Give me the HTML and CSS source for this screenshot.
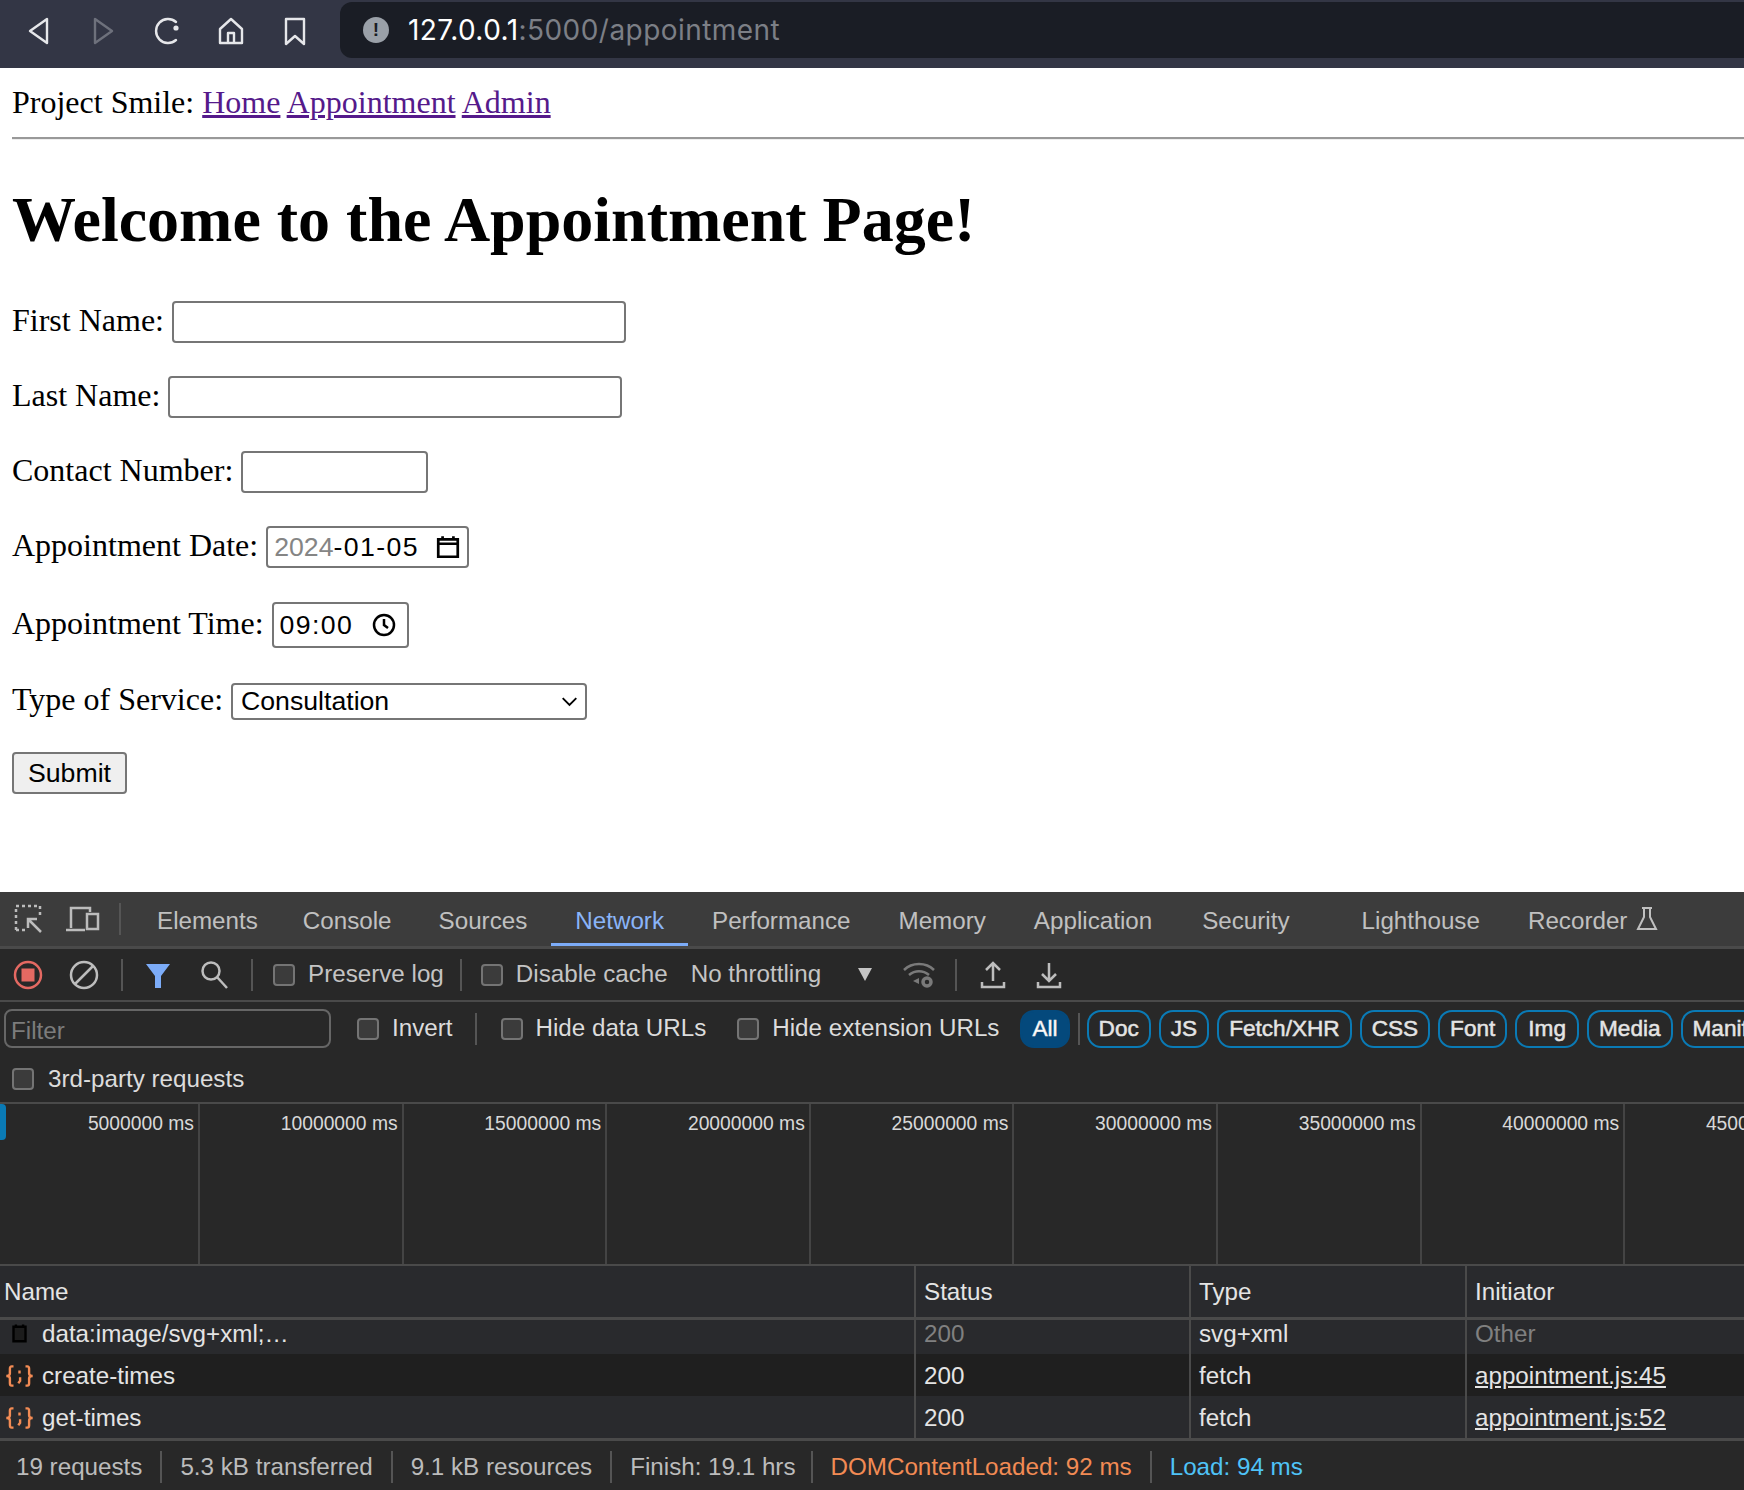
FILE: index.html
```html
<!DOCTYPE html>
<html lang="en">
<head>
<meta charset="utf-8">
<title>Appointment</title>
<link rel="stylesheet" href="styles.css">
</head>
<body>
<header class="browser">
  <div class="nav-icons">
    <svg class="bi" viewBox="0 0 34 34"><path d="M25 5v24L8 17z"/></svg>
    <svg class="bi dim" viewBox="0 0 34 34"><path d="M9 5v24l17-12z"/></svg>
    <svg class="bi" viewBox="0 0 34 34"><path d="M26 8a12 12 0 1 0 0 18"/><circle class="fill" cx="26" cy="14" r="2.6"/></svg>
    <svg class="bi" viewBox="0 0 34 34"><path d="M6 15L17 5l11 10v14H6zM14 29V19h6v10"/></svg>
    <svg class="bi" viewBox="0 0 34 34"><path d="M8 5h18v25l-9-8-9 8z"/></svg>
  </div>
  <div class="urlbar">
    <span class="warn">!</span>
    <span class="url"><b>127.0.0.1</b>:5000/appointment</span>
  </div>
</header>

<main class="page">
  <nav class="site-nav">Project Smile: <a href="#">Home</a> <a href="#">Appointment</a> <a href="#">Admin</a></nav>
  <hr class="rule">
  <h1>Welcome to the Appointment Page!</h1>
  <form class="form">
    <div class="row"><label>First Name:</label><input class="field wide" type="text"></div>
    <div class="row"><label>Last Name:</label><input class="field wide" type="text"></div>
    <div class="row"><label>Contact Number:</label><input class="field short" type="text"></div>
    <div class="row"><label>Appointment Date:</label>
      <div class="field date"><span class="muted">2024</span><span class="seg">-01-05</span>
        <svg class="ctl" viewBox="0 0 24 24"><path d="M3 5h18v16H3zM3 9h18M7 2v4M17 2v4"/></svg></div></div>
    <div class="row time-row"><label>Appointment Time:</label>
      <div class="field time"><span class="seg">09:00</span>
        <svg class="ctl" viewBox="0 0 24 24"><circle cx="12" cy="12" r="10"/><path d="M12 6v6l4 3"/></svg></div></div>
    <div class="row select-row"><label>Type of Service:</label>
      <div class="field select"><span>Consultation</span>
        <svg class="chev" viewBox="0 0 20 12"><path d="M2 2l8 8 8-8"/></svg></div></div>
    <div class="row"><button class="submit" type="button">Submit</button></div>
  </form>
</main>

<section class="devtools">
  <div class="tabs">
    <svg class="tool first" viewBox="0 0 30 30"><path class="dash" d="M2 26V2h24v10M2 26h10"/><path d="M27 28L14 15M14 24v-9h9"/></svg>
    <svg class="tool" viewBox="0 0 34 30"><path d="M5 24V4h19v4M0 26h19"/><rect x="21" y="10" width="11" height="15"/></svg>
    <i class="sep tab-sep"></i>
    <span class="tab">Elements</span><span class="tab">Console</span><span class="tab">Sources</span>
    <span class="tab active">Network</span><span class="tab">Performance</span><span class="tab">Memory</span>
    <span class="tab app">Application</span><span class="tab sec">Security</span><span class="tab">Lighthouse</span>
    <span class="tab">Recorder
      <svg class="flask" viewBox="0 0 24 26"><path d="M7 2h10M9 2v9L3 23h18l-6-12V2"/></svg></span>
  </div>

  <div class="toolbar">
    <svg class="tbi rec" viewBox="0 0 30 30"><circle cx="15" cy="15" r="13"/><rect x="8.500" y="8.500" width="13" height="13"/></svg>
    <svg class="tbi" viewBox="0 0 30 30"><circle cx="15" cy="15" r="13"/><path d="M6 24L24 6"/></svg>
    <i class="sep"></i>
    <svg class="tbi funnel" viewBox="0 0 30 30"><path d="M3 4h24L18 16v12h-6V16z"/></svg>
    <svg class="tbi" viewBox="0 0 30 30"><circle cx="12" cy="11" r="8.500"/><path d="M18 17l10 11"/></svg>
    <i class="sep"></i>
    <span class="check"></span><span class="opt">Preserve log</span>
    <i class="sep"></i>
    <span class="check"></span><span class="opt">Disable cache</span>
    <span class="opt throttle">No throttling</span>
    <span class="tri"></span>
    <svg class="tbi wifi" viewBox="0 0 34 30"><path d="M2 10c8-8 22-8 30 0M7 15c6-5 14-5 20 0"/><circle class="gear" cx="25" cy="22" r="4"/><path class="fillg" d="M11 21l6-3v6z"/></svg>
    <i class="sep"></i>
    <svg class="tbi" viewBox="0 0 30 30"><path d="M15 21V4M8 10l7-7 7 7M4 22v5h22v-5"/></svg>
    <svg class="tbi" viewBox="0 0 30 30"><path d="M15 3v17M8 14l7 7 7-7M4 22v5h22v-5"/></svg>
  </div>

  <div class="filters">
    <div class="filter-line">
      <div class="filter-input">Filter</div>
      <span class="check"></span><span class="opt light">Invert</span>
      <i class="sep short-sep"></i>
      <span class="check"></span><span class="opt light">Hide data URLs</span>
      <span class="check ext"></span><span class="opt light">Hide extension URLs</span>
      <span class="chip on">All</span>
      <i class="sep short-sep chip-sep"></i>
      <span class="chip">Doc</span><span class="chip">JS</span><span class="chip">Fetch/XHR</span><span class="chip">CSS</span><span class="chip">Font</span><span class="chip img">Img</span><span class="chip">Media</span><span class="chip">Manifest</span>
    </div>
    <div class="third"><span class="check"></span><span class="opt light">3rd-party requests</span></div>
  </div>

  <div class="timeline">
    <span class="handle"></span>
    <span class="tick first-tick">5000000 ms</span><span class="tick">10000000 ms</span><span class="tick">15000000 ms</span><span class="tick">20000000 ms</span><span class="tick">25000000 ms</span><span class="tick">30000000 ms</span><span class="tick">35000000 ms</span><span class="tick">40000000 ms</span><span class="tick">45000000 ms</span>
  </div>

  <div class="table">
    <div class="tr head"><span>Name</span><span>Status</span><span>Type</span><span>Initiator</span></div>
    <div class="tr r1"><span class="name"><svg class="ri" viewBox="0 0 24 20"><path class="cal" d="M7 4h10v12H7zM9 2v2M15 2v2"/></svg>data:image/svg+xml;…</span><span class="dimtxt">200</span><span>svg+xml</span><span class="dimtxt">Other</span></div>
    <div class="tr r2"><span class="name"><svg class="ri" viewBox="0 0 24 20"><path class="brace" d="M7 2H5.500Q4 2 4 4v4q0 2-3 2 3 0 3 2v4q0 2 1.500 2H7M17 2h1.500Q20 2 20 4v4q0 2 3 2-3 0-3 2v4q0 2-1.500 2H17M12 5.500v2.500M12.500 11v3l-1.500 2"/></svg>create-times</span><span>200</span><span>fetch</span><span class="lnk">appointment.js:45</span></div>
    <div class="tr r3"><span class="name"><svg class="ri" viewBox="0 0 24 20"><path class="brace" d="M7 2H5.500Q4 2 4 4v4q0 2-3 2 3 0 3 2v4q0 2 1.500 2H7M17 2h1.500Q20 2 20 4v4q0 2 3 2-3 0-3 2v4q0 2-1.500 2H17M12 5.500v2.500M12.500 11v3l-1.500 2"/></svg>get-times</span><span>200</span><span>fetch</span><span class="lnk">appointment.js:52</span></div>
  </div>

  <footer class="status">
    <span>19 requests</span><span>5.3 kB transferred</span><span>9.1 kB resources</span><span class="finish">Finish: 19.1 hrs</span><span class="dcl">DOMContentLoaded: 92 ms</span><span class="load">Load: 94 ms</span>
  </footer>
</section>
</body>
</html>
```
FILE: styles.css
```css
* { box-sizing: border-box; }
html, body { margin: 0; height: 1490px; overflow: hidden; }
body { display: flex; flex-direction: column; width: 1744px; background: #fff; font-family: "Liberation Serif", serif; }

/* browser chrome */
.browser { height: 68px; flex: none; display: flex; background: #333645; }
.nav-icons { width: 340px; display: flex; align-items: center; gap: 30px; padding: 0 0 7px 22px; }
.bi { width: 34px; height: 34px; fill: none; stroke: #e6e7ea; stroke-width: 2.4; stroke-linejoin: round; stroke-linecap: round; flex: none; }
.bi.dim { stroke: #6e717c; }
.bi .fill { fill: #e6e7ea; stroke: none; }
.urlbar { flex: 1; height: 56px; margin-top: 2px; background: #1a1d25; border-radius: 12px 0 0 12px; display: flex; align-items: center; padding-left: 23px; gap: 19px; }
.warn { width: 26px; height: 26px; border-radius: 50%; background: #9aa0a8; color: #1a1d25; font: 700 19px/26px "Liberation Sans", sans-serif; text-align: center; }
.url { font: 28px "Inter", sans-serif; color: #7c7f86; letter-spacing: .45px; }
.url b { font-weight: 400; color: #fff; }

/* page */
.page { height: 824px; flex: none; padding-left: 12px; color: #000; font-size: 32px; overflow: hidden; }
.site-nav { height: 69px; line-height: 68px; white-space: nowrap; }
.site-nav a { color: #551a8b; }
.rule { margin: 0; height: 3px; border: 0; border-top: 2px solid #999; border-bottom: 1px solid #eee; }
h1 { margin: 0; padding-top: 44px; height: 161px; font-size: 64px; line-height: 72px; font-weight: 700; white-space: nowrap; }
.form { display: flex; flex-direction: column; }
.row { display: flex; align-items: center; gap: 8px; margin-bottom: 33px; height: 42px; }
.row label { margin-top: -4px; }
.time-row { height: 46px; margin-top: 1px; margin-bottom: 35px; }
.select-row { height: 37px; margin-bottom: 32px; }
.field { border: 2px solid #767676; border-radius: 4px; background: #fff; height: 100%; font: 26.670px "Liberation Sans", sans-serif; color: #000; display: flex; align-items: center; padding: 0; }
.wide { width: 454px; }
.short { width: 187px; }
.date { width: 203px; padding-left: 6px; }
.time { width: 137px; padding-left: 6px; }
.muted { color: #858585; }
.seg { letter-spacing: 1.400px; }
.ctl { width: 24px; height: 24px; margin-left: auto; margin-right: 7px; fill: none; stroke: #000; stroke-width: 2.500; flex: none; }
.date .ctl { width: 26px; height: 26px; margin-right: 6px; }
.time .ctl { margin-right: 11px; }
.select { width: 356px; padding-left: 8px; }
.chev { width: 17px; height: 11px; margin-left: auto; margin-right: 7px; fill: none; stroke: #000; stroke-width: 2.200; }
.submit { width: 115px; height: 42px; border: 2px solid #767676; border-radius: 4px; background: #efefef; font: 26.670px "Liberation Sans", sans-serif; color: #000; padding: 0; }

/* devtools */
.devtools { flex: 1; min-height: 0; display: flex; flex-direction: column; background: #282828; color: #c8c8c8; font: 24.200px/1 "Liberation Sans", sans-serif; white-space: nowrap; overflow: hidden; }
.sep { width: 2px; height: 32px; background: #555; flex: none; }
.tabs { height: 57px; flex: none; display: flex; align-items: center; background: #3c3c3c; border-bottom: 3px solid #4a4a4a; }
.tool { height: 30px; width: 30px; fill: none; stroke: #bcbcbc; stroke-width: 2.500; flex: none; margin-left: 14px; }
.tool.first { margin-right: 8px; }
.tool .dash { stroke-dasharray: 3 3; }
.tool + .tool { width: 34px; }
.tab-sep { margin: 0 0 0 19px; }
.tab { height: 54px; line-height: 54px; padding: 3px 24px 0; display: inline-flex; align-items: center; gap: 8px; flex: none; color: #c0c0c0; }
.tab:first-of-type { margin-left: 12px; margin-right: -3px; }
.tab:nth-of-type(2) { margin-right: -1px; }
.tab.active { color: #8ab4f8; box-shadow: inset 0 -3px #7cacf8; }
.tab.app { margin-right: 2px; }
.tab.sec { margin-right: 24px; }
.flask { width: 24px; height: 26px; margin-top: -3px; fill: none; stroke: #c0c0c0; stroke-width: 2; }

.toolbar { height: 53px; flex: none; display: flex; align-items: center; border-bottom: 2px solid #4a4a4a; padding-left: 13px; }
.tbi { width: 30px; height: 30px; fill: none; stroke: #bdbdbd; stroke-width: 2.500; flex: none; margin-right: 26px; }
.rec { stroke: #e46962; }
.rec rect { fill: #e46962; stroke: none; }
.funnel { fill: #7cacf8; stroke: none; margin-right: 26px; }
.toolbar .sep { margin: 0 20px 0 -4px; }
.toolbar .check { margin-right: 13px; }
.check { width: 22px; height: 22px; border: 2px solid #747474; border-radius: 4px; background: #3b3b3b; flex: none; }
.opt { color: #c4c4c4; }
.opt.light { color: #dcdcdc; }
.toolbar .opt + .sep { margin-left: 16px; margin-right: 19px; }
.throttle { margin-left: 23px; }
.tri { width: 0; height: 0; border: 7px solid transparent; border-top: 13px solid #c4c4c4; border-bottom: 0; margin: 0 30px 0 37px; flex: none; }
.wifi { width: 34px; stroke: #7a7a7a; margin-right: 23px; }
.wifi + .sep { margin-right: 21px; }
.fillg { fill: #7a7a7a; stroke: none; }
.gear { fill: none; stroke: #7a7a7a; stroke-width: 3.500; }

.filters { height: 102px; flex: none; border-bottom: 2px solid #4a4a4a; background: #282828; }
.filter-line { height: 50px; display: flex; align-items: center; padding: 3px 0 0 4px; }
.filter-input { width: 327px; height: 39px; margin-top: -1px; border: 2px solid #666; border-radius: 8px; color: #7c7c7c; line-height: 39px; padding-left: 5px; margin-right: 26px; flex: none; }
.filter-line .check { margin-right: 13px; }
.short-sep { height: 32px; margin: 0 24px 0 22px; }
.check.ext { margin-left: 31px; }
.chip { height: 38px; line-height: 34px; border: 2px solid #0a7ab5; border-radius: 14px; padding: 0 10px; margin-right: 8px; font-size: 22.600px; color: #e4e4e4; flex: none; -webkit-text-stroke: .5px #e4e4e4; }
.chip.on { margin-left: 21px; background: #04497c; border-color: #04497c; color: #fff; margin-right: 0; padding: 0 10px; }
.chip-sep { margin: 0 7px 0 8px; }
.chip.img { padding: 0 11px; }
.third { height: 50px; display: flex; align-items: center; padding: 4px 0 0 12px; gap: 14px; }

.timeline { height: 162px; flex: none; display: flex; position: relative; border-bottom: 2px solid #4a4a4a; overflow: hidden; }
.handle { position: absolute; left: 0; top: 0; width: 6px; height: 36px; background: #0a7ab5; border-radius: 0 4px 4px 0; }
.tick { width: 203.600px; flex: none; text-align: right; padding: 10px 4px 0 0; border-right: 2px solid #444; font-size: 19.300px; color: #d8d8d8; }
.first-tick { width: 200px; }

.table { flex: none; background: #292a2d; }
.tr { display: grid; grid-template-columns: 914px 275px 276px 1fr; height: 42px; align-items: center; color: #e4e4e4; }
.tr > span { height: 100%; display: flex; align-items: center; padding-left: 8px; border-left: 2px solid #4a4a4a; }
.tr > span:first-child { border-left: 0; padding-left: 4px; }
.head { height: 54px; border-bottom: 3px solid #4a4a4a; }
.head > span { padding-top: 1px; }
.r1 { height: 34px; }
.r1 > span { padding-bottom: 6px; }
.r2 > span, .r3 > span { padding-top: 2px; }
.r2 { background: #1f1f1f; }
.tr .name { padding-left: 7px; gap: 8px; }
.ri { width: 29px; height: 24px; flex: none; fill: none; margin-left: 1px; }
.cal { stroke: #000; stroke-width: 2; fill: #1c1c1c; }
.brace { stroke: #f28b54; stroke-width: 2; }
.dimtxt { color: #808080; }
.lnk { text-decoration: underline; }

.status { flex: 1; display: flex; align-items: center; border-top: 3px solid #4a4a4a; padding: 2px 0 0 16px; color: #bcbcbc; background: #282828; }
.status span { padding-right: 18px; margin-right: 18px; border-right: 2px solid #555; line-height: 32px; height: 32px; }
.status .finish { padding-right: 15px; }
.status span:last-child { border: 0; }
.dcl { color: #f28b54; }
.load { color: #4fc3f7; }
```
